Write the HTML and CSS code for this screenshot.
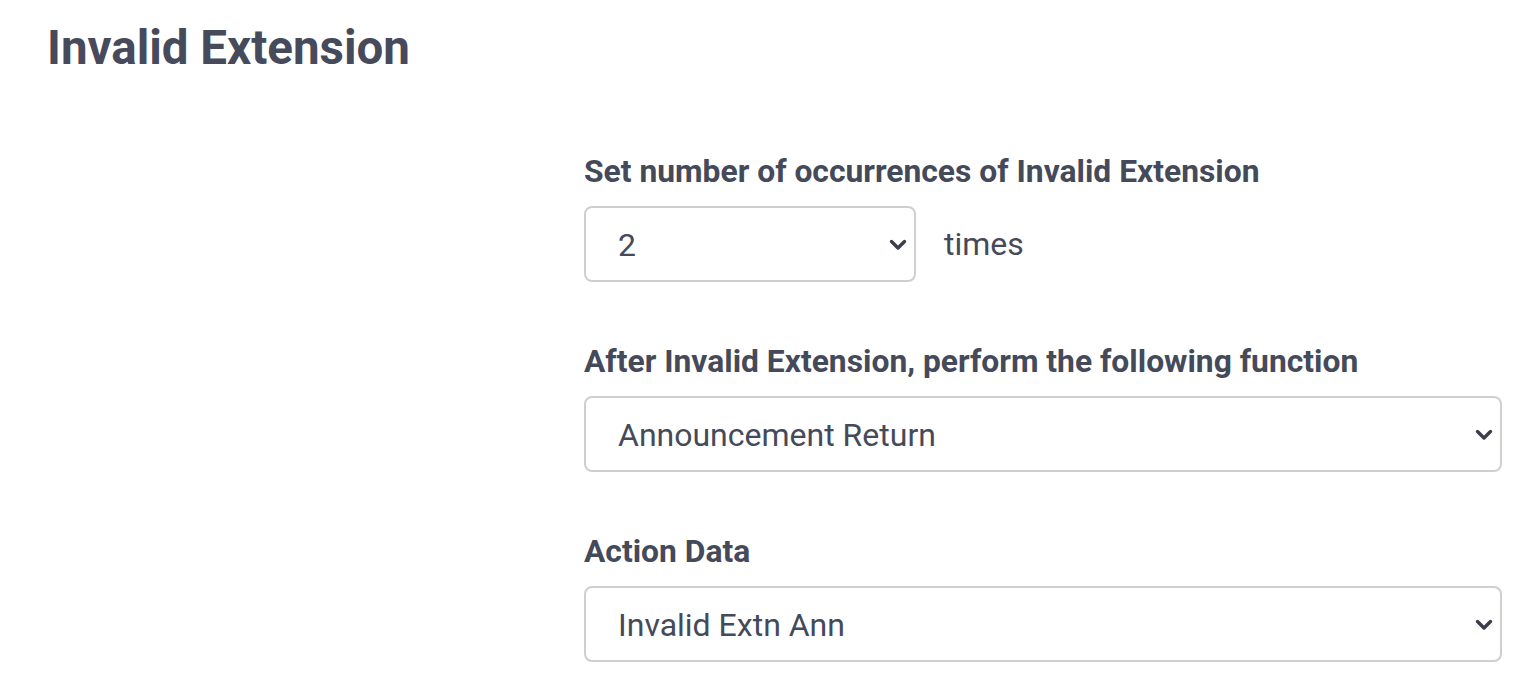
FILE: index.html
```html
<!DOCTYPE html>
<html>
<head>
<meta charset="utf-8">
<link rel="stylesheet" href="styles.css">
</head>
<body>
<div class="page">
  <h1 class="title">Invalid Extension</h1>
  <div class="form">
    <div class="field">
      <label class="label">Set number of occurrences of Invalid Extension</label>
      <div class="inline">
        <div class="select small">
          <span class="value">2</span>
          <svg class="chev" viewBox="0 0 18 12" width="18" height="12"><path d="M2.5 2.5 L9 9 L15.5 2.5" fill="none" stroke="#3b3f4c" stroke-width="3.4" stroke-linecap="round" stroke-linejoin="round"/></svg>
        </div>
        <span class="suffix">times</span>
      </div>
    </div>
    <div class="field">
      <label class="label">After Invalid Extension, perform the following function</label>
      <div class="select">
        <span class="value">Announcement Return</span>
        <svg class="chev" viewBox="0 0 18 12" width="18" height="12"><path d="M2.5 2.5 L9 9 L15.5 2.5" fill="none" stroke="#3b3f4c" stroke-width="3.4" stroke-linecap="round" stroke-linejoin="round"/></svg>
      </div>
    </div>
    <div class="field">
      <label class="label">Action Data</label>
      <div class="select">
        <span class="value">Invalid Extn Ann</span>
        <svg class="chev" viewBox="0 0 18 12" width="18" height="12"><path d="M2.5 2.5 L9 9 L15.5 2.5" fill="none" stroke="#3b3f4c" stroke-width="3.4" stroke-linecap="round" stroke-linejoin="round"/></svg>
      </div>
    </div>
  </div>
</div>
</body>
</html>
```
FILE: styles.css
```css
html, body {
  margin: 0;
  padding: 0;
  background: #ffffff;
}
body {
  font-family: Roboto, "Liberation Sans", sans-serif;
  color: #454a5a;
}
.page {
  padding: 20px 20px 0 47px;
}
.title {
  margin: 0;
  font-size: 47.5px;
  font-weight: 700;
  line-height: 56px;
  color: #464a5b;
}
.form {
  margin-left: 537px;
  padding-top: 76px;
  display: flex;
  flex-direction: column;
  gap: 60px;
}
.field {
  display: flex;
  flex-direction: column;
  gap: 16px;
}
.label {
  font-size: 31.8px;
  font-weight: 700;
  line-height: 38px;
  color: #454a5a;
}
.inline {
  display: flex;
  align-items: center;
  gap: 28px;
}
.select {
  box-sizing: border-box;
  height: 76px;
  width: 918px;
  border: 2px solid #cfcfcf;
  border-radius: 8px;
  display: flex;
  align-items: center;
  justify-content: space-between;
  padding: 2px 7px 0 32px;
}
.select.small {
  width: 332px;
}
.value {
  font-size: 32px;
  color: #454a5a;
}
.suffix {
  font-size: 32px;
  color: #454a5a;
}
.chev {
  display: block;
}
```
